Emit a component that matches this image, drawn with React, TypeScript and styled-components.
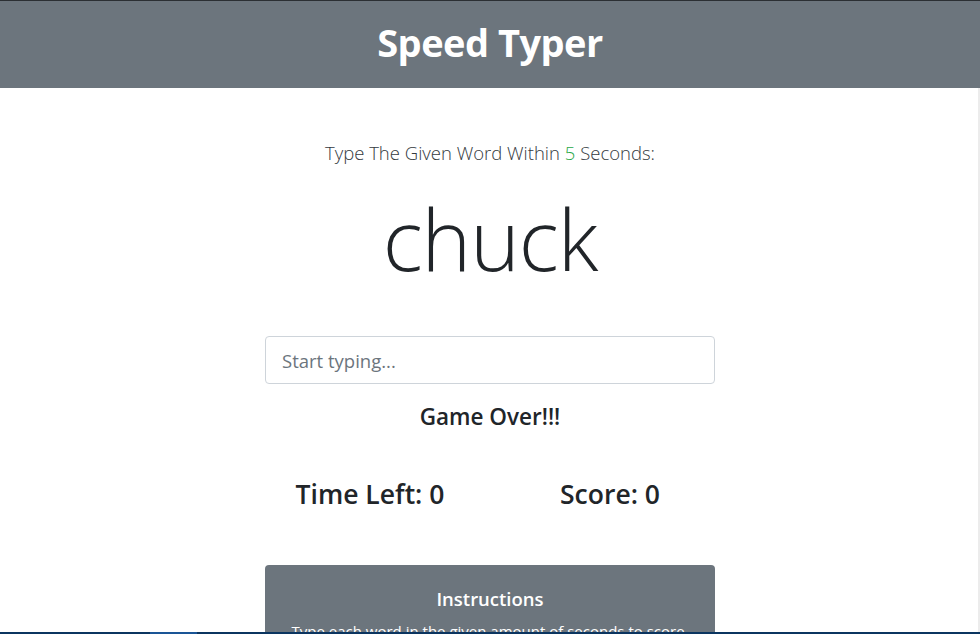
import React from 'react';
import styled, { createGlobalStyle } from 'styled-components';

const GlobalStyle = createGlobalStyle`
  * { box-sizing: border-box; }
  body {
    margin: 0;
    background: #fff;
    color: #212529;
    font-family: 'Open Sans', 'Noto Sans', sans-serif;
    border-top: 1px solid #2b2f33;
  }
`;

const Header = styled.header`
  height: 87px;
  padding-bottom: 3px;
  background-color: #6c757d;
  display: flex;
  align-items: center;
  justify-content: center;
`;

const Title = styled.h1`
  margin: 0;
  color: #fff;
  font-size: 38px;
  font-weight: 700;
  line-height: 1.2;
  letter-spacing: -0.5px;
`;

const Main = styled.main`
  display: flex;
  flex-direction: column;
  align-items: center;
  padding-top: 50px;
`;

const Lead = styled.p`
  margin: 0;
  font-size: 18.5px;
  font-weight: 300;
  line-height: 30px;
  color: #343a40;
`;

const Seconds = styled.span`
  color: #28a745;
`;

const Word = styled.h2`
  margin: 14px 0 0;
  font-size: 84px;
  font-weight: 300;
  line-height: 113px;
  letter-spacing: -1px;
`;

const Input = styled.input`
  margin-top: 41px;
  width: 450px;
  height: 48px;
  padding: 8px 16px;
  font-family: inherit;
  font-size: 18.5px;
  color: #495057;
  border: 1px solid #ced4da;
  border-radius: 4px;
  outline: none;
  &::placeholder { color: #6c757d; }
`;

const Status = styled.h5`
  margin: 19px 0 0;
  font-size: 22.5px;
  font-weight: 600;
  line-height: 27px;
`;

const Stats = styled.div`
  margin-top: 47px;
  display: grid;
  grid-template-columns: 240px 240px;
`;

const Stat = styled.h3`
  margin: 0;
  text-align: center;
  font-size: 26.5px;
  font-weight: 600;
  line-height: 34px;
`;

const Card = styled.section`
  margin-top: 54px;
  width: 450px;
  background-color: #6c757d;
  color: #fff;
  border-radius: 4px;
  padding: 22px 20px 20px;
  text-align: center;
`;

const CardTitle = styled.h5`
  margin: 0 0 8px;
  font-size: 18.5px;
  font-weight: 600;
  line-height: 24px;
`;

const CardText = styled.p`
  margin: 0;
  font-size: 15px;
  line-height: 24px;
`;

const Taskbar = styled.div`
  position: fixed;
  left: 0;
  right: 0;
  bottom: 0;
  height: 2px;
  background: #0b3560;
`;

const TaskbarActive = styled.div`
  position: absolute;
  left: 150px;
  width: 47px;
  top: 0;
  bottom: 0;
  background: #1a5596;
`;

const ScrollEdge = styled.div`
  position: fixed;
  top: 88px;
  right: 0;
  bottom: 0;
  width: 2px;
  background: #ececec;
`;

export default function App() {
  return (
    <>
      <GlobalStyle />
      <Header>
        <Title>Speed Typer</Title>
      </Header>
      <Main>
        <Lead>
          Type The Given Word Within <Seconds>5</Seconds> Seconds:
        </Lead>
        <Word>chuck</Word>
        <Input type="text" placeholder="Start typing..." />
        <Status>Game Over!!!</Status>
        <Stats>
          <Stat>Time Left: 0</Stat>
          <Stat>Score: 0</Stat>
        </Stats>
        <Card>
          <CardTitle>Instructions</CardTitle>
          <CardText>
            Type each word in the given amount of seconds to score. To play again, just start typing.
          </CardText>
        </Card>
      </Main>
      <ScrollEdge />
      <Taskbar>
        <TaskbarActive />
      </Taskbar>
    </>
  );
}
